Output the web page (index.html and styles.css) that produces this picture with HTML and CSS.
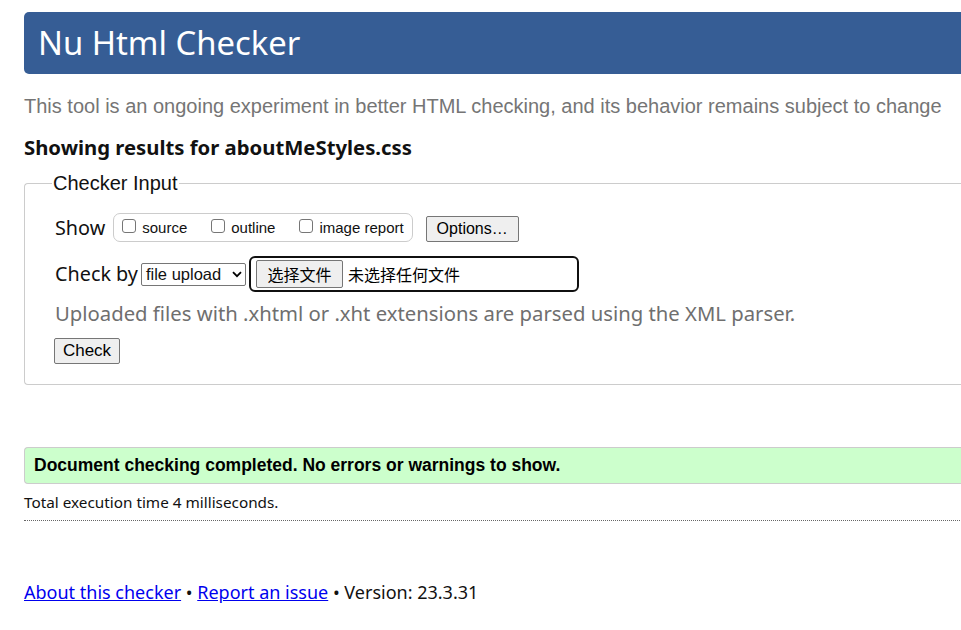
FILE: index.html
```html
<!DOCTYPE html>
<html lang="en">
<head>
<meta charset="utf-8">
<title>Showing results for aboutMeStyles.css - Nu Html Checker</title>
<link rel="stylesheet" href="styles.css">
</head>
<body>
<div class="page">
  <h1 class="banner">Nu Html Checker</h1>
  <p class="intro">This tool is an ongoing experiment in better HTML checking, and its behavior remains subject to change</p>
  <h2 class="showing">Showing results for aboutMeStyles.css</h2>
  <form class="checker">
    <fieldset class="input-set">
      <legend class="input-legend">Checker Input</legend>
      <div class="row">
        <span class="row-label">Show</span>
        <fieldset class="show-box">
          <label class="opt"><span class="cb"></span>source</label>
          <label class="opt"><span class="cb"></span>outline</label>
          <label class="opt"><span class="cb"></span>image report</label>
        </fieldset>
        <span class="btn btn-options">Options…</span>
      </div>
      <div class="row row-check">
        <span class="row-label">Check by</span>
        <span class="select">file upload<svg class="chev" width="10" height="7" viewBox="0 0 10 7"><path d="M1 1.2 L5 5.2 L9 1.2" fill="none" stroke="#000" stroke-width="1.8"/></svg></span>
        <span class="file">
          <span class="btn btn-file">选择文件</span>
          <span class="file-none">未选择任何文件</span>
        </span>
      </div>
      <p class="hint">Uploaded files with .xhtml or .xht extensions are parsed using the XML parser.</p>
      <span class="btn btn-check">Check</span>
    </fieldset>
  </form>
  <p class="success">Document checking completed. No errors or warnings to show.</p>
  <p class="stats">Total execution time 4 milliseconds.</p>
  <p class="footer"><a href="#">About this checker</a> • <a href="#">Report an issue</a> • Version: 23.3.31</p>
</div>
</body>
</html>
```
FILE: styles.css
```css
html {
  overflow: hidden;
}
body {
  margin: 0;
  padding: 12px 0 0 24px;
  font-family: "Noto Sans", "Segoe UI", sans-serif;
  color: #111;
  background: #fff;
}
.page {
  width: 1000px;
}
.banner {
  margin: 0;
  height: 62px;
  box-sizing: border-box;
  padding: 10px 0 0 14px;
  background: #365d95;
  color: #fff;
  font-weight: normal;
  font-size: 32.8px;
  line-height: 42px;
  border-radius: 5px 0 0 5px;
}
.intro {
  margin: 20px 0 0 0;
  font-family: "Liberation Sans", Arial, sans-serif;
  font-size: 20px;
  line-height: 24px;
  color: #757575;
}
.showing {
  margin: 16px 0 0 0;
  font-size: 20.3px;
  line-height: 26px;
  font-weight: bold;
  color: #111;
}
.checker {
  margin: 12px 0 0 0;
}
.input-set {
  margin: 0;
  border: 1px solid #ccc;
  border-right: none;
  border-radius: 4px 0 0 4px;
  padding: 4px 0 20px 30px;
}
.input-legend {
  font-family: "Liberation Sans", Arial, sans-serif;
  font-size: 20px;
  padding: 0 1px;
  margin-left: -3px;
  color: #111;
}
.row {
  display: flex;
  align-items: center;
  margin-top: 14px;
}
.row-label {
  font-size: 19.8px;
  line-height: 26px;
  color: #111;
  margin-right: 5px;
}
.show-box {
  margin: 0 0 0 3px;
  border: 1px solid #ccc;
  border-radius: 7px;
  padding: 2px 8px 2px 8px;
  display: flex;
  gap: 24px;
  height: 29px;
  box-sizing: border-box;
  align-items: center;
}
.opt {
  display: flex;
  align-items: center;
  font-family: "Liberation Sans", Arial, sans-serif;
  font-size: 15px;
  color: #111;
}
.cb {
  width: 14px;
  height: 14px;
  border: 1px solid #767676;
  border-radius: 3px;
  box-sizing: border-box;
  margin-right: 6px;
  position: relative;
  top: -2px;
}
.btn {
  display: inline-flex;
  align-items: center;
  justify-content: center;
  box-sizing: border-box;
  background: #efefef;
  border: 1px solid #767676;
  border-radius: 2px;
  font-family: "Liberation Sans", Arial, sans-serif;
  color: #000;
}
.btn-options {
  margin-left: 13px;
  width: 93px;
  height: 26px;
  font-size: 16px;
  margin-top: 2px;
}
.row-check {
  margin-top: 14px;
}
.select {
  display: inline-flex;
  align-items: center;
  height: 23px;
  width: 105px;
  box-sizing: border-box;
  border: 1px solid #767676;
  border-radius: 2px;
  padding: 0 3px 0 4px;
  font-family: "Liberation Sans", Arial, sans-serif;
  font-size: 16.5px;
  justify-content: space-between;
  margin-left: -2px;
}
.chev {
  margin-left: 3px;
}
.file {
  display: inline-flex;
  align-items: center;
  margin-left: 3px;
  height: 36px;
  width: 330px;
  box-sizing: border-box;
  border: 2px solid #101010;
  border-radius: 6px;
  padding-left: 5px;
}
.btn-file {
  height: 28px;
  width: 87px;
  font-family: "Noto Sans CJK SC", sans-serif;
  font-size: 16px;
}
.file-none {
  margin-left: 5px;
  font-family: "Noto Sans CJK SC", sans-serif;
  font-size: 16px;
  color: #000;
}
.hint {
  margin: 8px 0 0 0;
  font-size: 20.3px;
  line-height: 26px;
  color: #6f6f6f;
}
.btn-check {
  margin-top: 12px;
  width: 66px;
  height: 26px;
  font-size: 17px;
  margin-left: -1px;
}
.success {
  margin: 62px 0 0 0;
  height: 37px;
  box-sizing: border-box;
  background: #ccffcc;
  border: 1px solid #ccc;
  border-right: none;
  border-radius: 4px 0 0 4px;
  padding: 0 0 0 9px;
  display: flex;
  align-items: center;
  font-family: "Liberation Sans", Arial, sans-serif;
  font-weight: bold;
  font-size: 17.5px;
  color: #000;
}
.stats {
  margin: 8px 0 0 0;
  padding-bottom: 8px;
  border-bottom: 1px dotted #666;
  font-size: 15.3px;
  line-height: 20px;
  color: #111;
}
.footer {
  margin: 58px 0 0 0;
  font-size: 18px;
  line-height: 26px;
  color: #111;
}
.footer a {
  color: #0000ee;
}
```
